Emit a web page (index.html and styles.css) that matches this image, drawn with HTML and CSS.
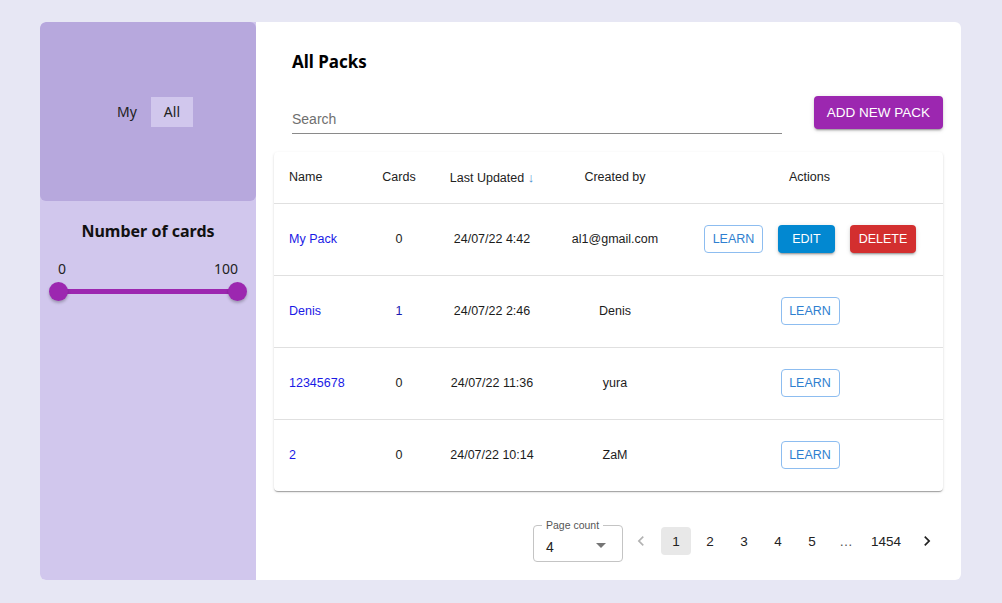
FILE: index.html
```html
<!DOCTYPE html>
<html lang="en">
<head>
<meta charset="utf-8">
<title>All Packs</title>
<link rel="stylesheet" href="styles.css">
</head>
<body>
<div class="page">
  <div class="app">
    <aside class="sidebar">
      <div class="owner-box">
        <div class="toggle">
          <button class="toggle-btn">My</button>
          <button class="toggle-btn active">All</button>
        </div>
      </div>
      <div class="filter">
        <h3 class="filter-title">Number of cards</h3>
        <div class="range-labels"><span>0</span><span>100</span></div>
        <div class="slider">
          <div class="track"></div>
          <span class="thumb thumb-left"></span>
          <span class="thumb thumb-right"></span>
        </div>
      </div>
    </aside>
    <main class="main">
      <h2 class="title">All Packs</h2>
      <div class="toolbar">
        <div class="search"><input class="search-input" type="text" placeholder="Search"></div>
        <button class="btn-add">ADD NEW PACK</button>
      </div>
      <div class="table-card">
        <table class="packs">
          <colgroup>
            <col class="c-name"><col class="c-cards"><col class="c-date"><col class="c-by"><col class="c-act">
          </colgroup>
          <thead>
            <tr>
              <th class="left">Name</th>
              <th>Cards</th>
              <th>Last Updated <span class="sort">↓</span></th>
              <th>Created by</th>
              <th>Actions</th>
            </tr>
          </thead>
          <tbody>
            <tr>
              <td class="left"><a class="link">My Pack</a></td>
              <td>0</td>
              <td>24/07/22 4:42</td>
              <td>al1@gmail.com</td>
              <td><div class="actions"><button class="btn-learn">LEARN</button><button class="btn-edit">EDIT</button><button class="btn-delete">DELETE</button></div></td>
            </tr>
            <tr>
              <td class="left"><a class="link">Denis</a></td>
              <td class="num-link">1</td>
              <td>24/07/22 2:46</td>
              <td>Denis</td>
              <td><div class="actions"><button class="btn-learn">LEARN</button></div></td>
            </tr>
            <tr>
              <td class="left"><a class="link">12345678</a></td>
              <td>0</td>
              <td>24/07/22 11:36</td>
              <td>yura</td>
              <td><div class="actions"><button class="btn-learn">LEARN</button></div></td>
            </tr>
            <tr>
              <td class="left"><a class="link">2</a></td>
              <td>0</td>
              <td>24/07/22 10:14</td>
              <td>ZaM</td>
              <td><div class="actions"><button class="btn-learn">LEARN</button></div></td>
            </tr>
          </tbody>
        </table>
      </div>
      <div class="footer">
        <div class="select">
          <span class="select-label">Page count</span>
          <span class="select-value">4</span>
          <svg class="select-arrow" viewBox="0 0 24 24" width="24" height="24"><path d="M7 10l5 5 5-5z"/></svg>
        </div>
        <nav class="pager">
          <span class="pg disabled"><svg viewBox="0 0 24 24" width="20" height="20"><path d="M15.41 7.41 14 6l-6 6 6 6 1.41-1.41L10.83 12z"/></svg></span>
          <span class="pg current">1</span>
          <span class="pg">2</span>
          <span class="pg">3</span>
          <span class="pg">4</span>
          <span class="pg">5</span>
          <span class="pg dots">…</span>
          <span class="pg">1454</span>
          <span class="pg"><svg viewBox="0 0 24 24" width="20" height="20"><path d="M10 6 8.59 7.41 13.17 12l-4.58 4.59L10 18l6-6z"/></svg></span>
        </nav>
      </div>
    </main>
  </div>
</div>
</body>
</html>
```
FILE: styles.css
```css
* { box-sizing: border-box; }
html, body { margin: 0; padding: 0; }
body {
  background: #e7e7f4;
  font-family: "Liberation Sans", Arial, sans-serif;
  color: rgba(0,0,0,0.87);
}
.page {
  padding: 22px 41px 23px 40px;
}
.app {
  display: flex;
  height: 558px;
  border-radius: 6px;
  overflow: hidden;
  background: #fff;
}
.sidebar {
  width: 216px;
  flex: none;
  background: #d1c7ed;
  display: flex;
  flex-direction: column;
}
.owner-box {
  height: 179px;
  background: #b7a8dd;
  border-radius: 6px;
  display: flex;
  align-items: center;
  justify-content: center;
}
.toggle {
  display: flex;
  gap: 7px;
  margin-left: 7px;
}
.toggle-btn {
  border: none;
  background: transparent;
  font-family: "Noto Sans", "Open Sans", sans-serif;
  font-size: 14px;
  color: #222;
  height: 30px;
  padding: 0 7px;
  cursor: pointer;
}
.toggle-btn.active {
  background: #d1c7ed;
  padding: 0 13px;
}
.filter {
  padding: 18px 18px 0 18px;
}
.filter-title {
  margin: 0;
  text-align: center;
  font-family: "Noto Sans", "Open Sans", sans-serif;
  font-size: 16px;
  font-weight: 700;
  color: #111;
  line-height: 24px;
}
.range-labels {
  display: flex;
  justify-content: space-between;
  margin-top: 18px;
  font-family: "Noto Sans", "Open Sans", sans-serif;
  font-size: 14px;
  color: #222;
  line-height: 16px;
}
.slider {
  position: relative;
  height: 22px;
  margin-top: 3px;
}
.track {
  position: absolute;
  left: 0;
  right: 0;
  top: 9px;
  height: 5px;
  background: #9c27b0;
  border-radius: 3px;
}
.thumb {
  position: absolute;
  top: 2px;
  width: 19px;
  height: 19px;
  border-radius: 50%;
  background: #9c27b0;
  box-shadow: 0 2px 3px rgba(0,0,0,0.25);
}
.thumb-left { left: -9px; }
.thumb-right { right: -9px; }

.main {
  flex: 1;
  padding: 0 18px;
  display: flex;
  flex-direction: column;
}
.title {
  margin: 29px 0 0 18px;
  font-family: "Noto Sans", "Open Sans", sans-serif;
  font-size: 17px;
  font-weight: 700;
  color: #000;
  line-height: 22px;
}
.toolbar {
  display: flex;
  align-items: center;
  justify-content: space-between;
  margin-top: 23px;
  padding-left: 18px;
  height: 33px;
}
.search {
  width: 490px;
  border-bottom: 1px solid #8a8a8a;
  padding-bottom: 4px;
  margin-top: 17px;
}
.search-input {
  border: none;
  outline: none;
  background: transparent;
  width: 100%;
  font-family: "Liberation Sans", Arial, sans-serif;
  font-size: 14px;
  padding: 0;
  height: 20px;
}
.search-input::placeholder { color: #6f6f6f; }
.btn-add {
  width: 129px;
  height: 33px;
  border: none;
  border-radius: 4px;
  background: #9c27b0;
  color: #fff;
  font-family: "Liberation Sans", Arial, sans-serif;
  font-size: 13.5px;
  box-shadow: 0 3px 1px -2px rgba(0,0,0,0.2), 0 2px 2px rgba(0,0,0,0.14), 0 1px 5px rgba(0,0,0,0.12);
}
.table-card {
  margin-top: 23px;
  background: #fff;
  border-radius: 4px;
  box-shadow: 0 2px 1px -1px rgba(0,0,0,0.2), 0 1px 1px rgba(0,0,0,0.14), 0 1px 3px rgba(0,0,0,0.12);
  overflow: hidden;
}
.packs {
  width: 100%;
  border-collapse: collapse;
  table-layout: fixed;
  font-size: 12.5px;
}
.c-name { width: 94px; }
.c-cards { width: 62px; }
.c-date { width: 124px; }
.c-by { width: 122px; }
.c-act { width: auto; }
.packs th {
  height: 51px;
  font-weight: 400;
  color: #222;
  text-align: center;
  border-bottom: 1px solid #e0e0e0;
  padding: 0;
}
.packs td {
  height: 72px;
  text-align: center;
  border-bottom: 1px solid #e0e0e0;
  padding: 0;
  color: #1c1c1c;
}
.packs tbody tr:last-child td { border-bottom: none; height: 72px; }
.packs .left { text-align: left; padding-left: 15px; }
.sort { color: #4a90d0; font-size: 13px; }
.link { color: #1a1ae6; }
.num-link { color: #1a1ab0 !important; }
.actions {
  display: flex;
  justify-content: center;
  gap: 15px;
  padding-left: 1px;
}
.actions button {
  height: 28px;
  border-radius: 4px;
  font-family: "Liberation Sans", Arial, sans-serif;
  font-size: 12.5px;
  padding: 0;
}
.btn-learn {
  width: 59px;
  background: #fff;
  border: 1px solid #8dbdf0;
  color: #2f7fd0;
}
.btn-edit {
  width: 57px;
  border: none;
  background: #0288d1;
  color: #fff;
  box-shadow: 0 3px 1px -2px rgba(0,0,0,0.2), 0 2px 2px rgba(0,0,0,0.14), 0 1px 5px rgba(0,0,0,0.12);
}
.btn-delete {
  width: 66px;
  border: none;
  background: #d32f2f;
  color: #fff;
  box-shadow: 0 3px 1px -2px rgba(0,0,0,0.2), 0 2px 2px rgba(0,0,0,0.14), 0 1px 5px rgba(0,0,0,0.12);
}
.footer {
  display: flex;
  justify-content: flex-end;
  align-items: center;
  margin-top: 29px;
  gap: 2px;
}
.select {
  position: relative;
  width: 90px;
  height: 37px;
  border: 1px solid #c4c4c4;
  border-radius: 4px;
  display: flex;
  align-items: center;
  padding: 6px 0 0 12px;
  margin-top: 5px;
}
.select-label {
  position: absolute;
  top: -7px;
  left: 8px;
  background: #fff;
  padding: 0 4px;
  font-size: 10.5px;
  color: #555;
  line-height: 12px;
}
.select-value { font-size: 14px; color: #222; }
.select-arrow {
  position: absolute;
  right: 9px;
  top: 7px;
  fill: rgba(0,0,0,0.54);
}
.pager {
  display: flex;
  gap: 4px;
  align-items: center;
}
.pg {
  min-width: 30px;
  height: 28px;
  padding: 0 6px;
  display: flex;
  align-items: center;
  justify-content: center;
  font-size: 13.5px;
  color: #222;
  border-radius: 4px;
}
.pg svg { fill: #222; }
.pg.disabled svg { fill: rgba(0,0,0,0.3); }
.pg.current { background: #e8e8e8; }
.pg.dots { color: #555; }
```
